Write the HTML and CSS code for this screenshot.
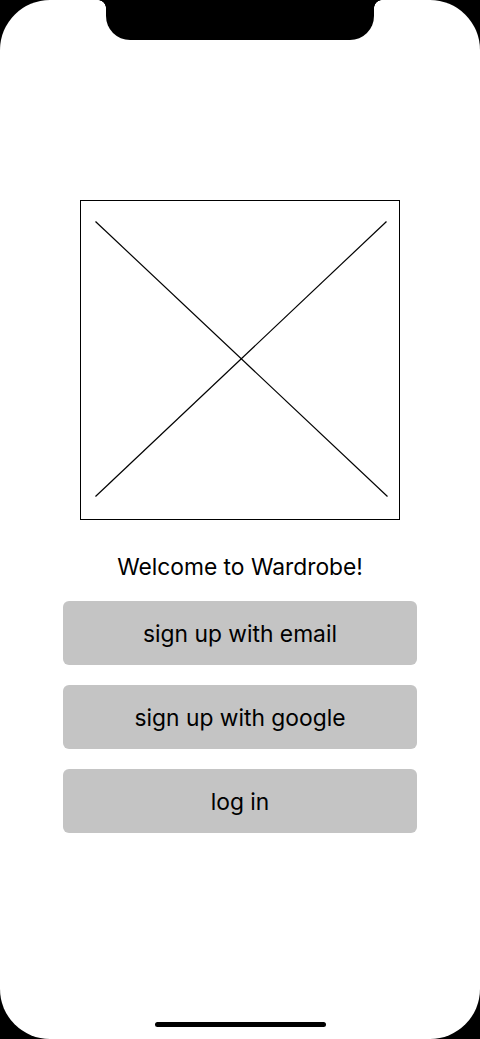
FILE: index.html
```html
<!DOCTYPE html>
<html lang="en">
<head>
<meta charset="utf-8">
<title>Wardrobe</title>
<link rel="stylesheet" href="styles.css">
</head>
<body>
<div class="screen">
  <div class="notch"></div>
  <main class="content">
    <div class="placeholder">
      <svg class="placeholder-x" width="318" height="318" viewBox="0 0 318 318">
        <line x1="14.5" y1="20.5" x2="306.5" y2="295.5" stroke="#000" stroke-width="1.2"/>
        <line x1="305.5" y1="20.5" x2="14.5" y2="295.5" stroke="#000" stroke-width="1.2"/>
      </svg>
    </div>
    <p class="welcome">Welcome to Wardrobe!</p>
    <div class="actions">
      <button class="btn">sign up with email</button>
      <button class="btn">sign up with google</button>
      <button class="btn">log in</button>
    </div>
  </main>
  <div class="home-indicator"></div>
</div>
</body>
</html>
```

FILE: styles.css
```css
* { box-sizing: border-box; }
html, body {
  margin: 0;
  padding: 0;
  background: #000;
}
body {
  width: 480px;
  height: 1039px;
  overflow: hidden;
  font-family: "Inter", "Liberation Sans", sans-serif;
}
.screen {
  position: relative;
  width: 480px;
  height: 1039px;
  background: #fff;
  border-radius: 50px;
  overflow: hidden;
}
.notch {
  position: absolute;
  top: 0;
  left: 106px;
  width: 268px;
  height: 40px;
  background: #000;
  border-radius: 0 0 24px 24px;
}
.notch::before,
.notch::after {
  content: "";
  position: absolute;
  top: 0;
  width: 8px;
  height: 8px;
}
.notch::before {
  left: -8px;
  background: radial-gradient(circle at 0 100%, transparent 7.5px, #000 8px);
}
.notch::after {
  right: -8px;
  background: radial-gradient(circle at 100% 100%, transparent 7.5px, #000 8px);
}
.content {
  display: flex;
  flex-direction: column;
  align-items: center;
  padding-top: 200px;
}
.placeholder {
  width: 320px;
  height: 320px;
  border: 1px solid #000;
}
.placeholder-x { display: block; }
.welcome {
  margin: 32px 0 0;
  font-size: 22.8px;
  line-height: 30px;
  color: #000;
  text-align: center;
}
.actions {
  display: flex;
  flex-direction: column;
  gap: 20px;
  margin-top: 19px;
}
.btn {
  width: 354px;
  height: 64px;
  border: none;
  border-radius: 6px;
  background: #c4c4c4;
  font-family: inherit;
  font-size: 22.8px;
  color: #000;
  padding: 0;
}
.home-indicator {
  position: absolute;
  left: 155px;
  bottom: 12px;
  width: 171px;
  height: 5px;
  border-radius: 3px;
  background: #000;
}
```
